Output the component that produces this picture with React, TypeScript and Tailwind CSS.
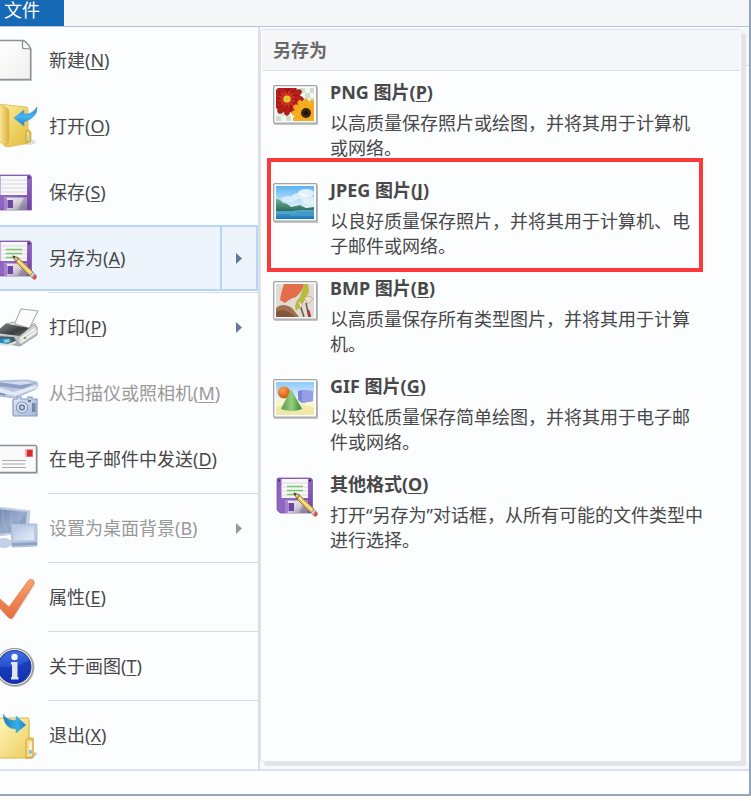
import React from 'react'
import clsx from 'clsx'

interface MenuEntry {
  label: string
  hotkey: string
  icon: React.ReactNode
  submenu?: boolean
  active?: boolean
  disabled?: boolean
  separator?: boolean
}

interface FormatEntry {
  label: string
  hotkey: string
  description: string
  icon: React.ReactNode
  marked?: boolean
}

/* ---------- 左侧菜单图标 ---------- */

const MenuIcon: React.FC<{ children: React.ReactNode }> = ({ children }) => (
  <svg viewBox="0 0 40 48" className="h-12 w-10 shrink-0" aria-hidden="true">
    {children}
  </svg>
)

const NewIcon = () => (
  <MenuIcon>
    <defs>
      <linearGradient id="newPage" x1="0" y1="0" x2="1" y2="1">
        <stop offset="0" stopColor="#ffffff" />
        <stop offset="1" stopColor="#f0f0ef" />
      </linearGradient>
    </defs>
    <path d="M-4 5H23L32 13V45H-4Z" fill="#c9cacb" />
    <path d="M-4 4.500H23Q26 5 30.500 12V43.500H-4Z" fill="url(#newPage)" stroke="#8f9191" strokeWidth="1.300" />
    <path d="M22.500 4.500V11.500Q23 13 25 12.500L30.500 13Q28 6.500 22.500 4.500Z" fill="#fafafa" stroke="#8f9191" strokeWidth="1.200" />
  </MenuIcon>
)

const OpenIcon = () => (
  <MenuIcon>
    <defs>
      <linearGradient id="openBack" x1="0" y1="0" x2="1" y2="1">
        <stop offset="0" stopColor="#fdf0a8" />
        <stop offset="0.500" stopColor="#eed467" />
        <stop offset="1" stopColor="#e3b93c" />
      </linearGradient>
      <linearGradient id="openFront" x1="0" y1="0" x2="1" y2="0">
        <stop offset="0" stopColor="#fff3a9" />
        <stop offset="1" stopColor="#dcae3f" />
      </linearGradient>
      <linearGradient id="openArrow" x1="0" y1="0" x2="0" y2="1">
        <stop offset="0" stopColor="#3a7fc0" />
        <stop offset="0.500" stopColor="#47b4f2" />
        <stop offset="1" stopColor="#1d7fd0" />
      </linearGradient>
    </defs>
    <ellipse cx="28" cy="40" rx="8" ry="3" fill="#c9cbcf" opacity="0.600" />
    <path d="M-2 2L26 5Q28 5 28 7V27L31 30V38Q31 40 29 41L8 45L-2 38Z" fill="url(#openBack)" stroke="#dfb752" strokeWidth="0.800" />
    <path d="M-2 2L7 6Q9 7 9 10V40L6 45L-2 38Z" fill="url(#openFront)" stroke="#dfb752" strokeWidth="0.800" />
    <path d="M26 29Q30 28 30 32V39L26 40Z" fill="#f5df87" stroke="#c99425" strokeWidth="0.800" />
    <rect x="27" y="33" width="1.500" height="6" fill="#9dd7e8" />
    <path d="M37 5Q38 15 24 20V24L14 16L24 8V12Q32 13 37 5Z" fill="url(#openArrow)" stroke="#4c9bd6" strokeWidth="0.600" />
  </MenuIcon>
)

const FloppyShape: React.FC<{ uid: string; pencil?: boolean }> = ({ uid, pencil }) => (
  <>
    <defs>
      <linearGradient id={`${uid}-body`} x1="0" y1="0" x2="1" y2="1">
        <stop offset="0" stopColor="#8a60bd" />
        <stop offset="0.500" stopColor="#9267c3" />
        <stop offset="1" stopColor="#6f3ca5" />
      </linearGradient>
      <linearGradient id={`${uid}-metal`} x1="0" y1="0" x2="1" y2="1">
        <stop offset="0" stopColor="#f4f2f7" />
        <stop offset="0.500" stopColor="#d3d0da" />
        <stop offset="1" stopColor="#8d8797" />
      </linearGradient>
    </defs>
    <path d="M1 0H34L35.500 2V35H3L0 32V1Z" fill={`url(#${uid}-body)`} stroke="#77529f" strokeWidth="0.700" />
    <rect x="4.500" y="1" width="26.500" height="19" fill="#f7f7f9" />
    <path d="M4.500 5H31M4.500 9H31M4.500 13H31M4.500 17H31" stroke="#d5d5dc" strokeWidth="0.900" />
    <path d="M32 2.500H34M1.500 2.500H3" stroke="#432266" strokeWidth="1.800" />
    <rect x="8" y="22.500" width="23" height="12.500" fill={`url(#${uid}-metal)`} />
    <rect x="8" y="22.500" width="3" height="12.500" fill="#a385cb" />
    <rect x="11.500" y="25" width="5.500" height="8" fill="#7044a5" />
    <path d="M22 35L28 22.500H31V35Z" fill="#79658e" opacity="0.450" />
    {pencil && (
      <>
        <path d="M10 8.500H26M10 12.500H26M10 16.500H22" stroke="#7bc96c" strokeWidth="1.700" />
        <path d="M17 15L22.500 17L20 21Z" fill="#ead1a0" stroke="#6d5135" strokeWidth="0.800" />
        <path d="M16.500 14.500L19.500 15.800L17.800 18Z" fill="#433b32" />
        <path d="M22.500 17L37 31L34 35L20 21Z" fill="#e8c15e" stroke="#8c6839" strokeWidth="0.800" />
        <path d="M22 19.500L35.500 32.500" stroke="#fff0a7" strokeWidth="1.200" />
        <path d="M37 31L39 33L36 37L34 35Z" fill="#c4d3c8" stroke="#7a9080" strokeWidth="0.500" />
        <path d="M39 33Q42 35 40 38Q38 40 36 37Z" fill="#dc5357" />
      </>
    )}
  </>
)

const SaveIcon = () => (
  <MenuIcon>
    <g transform="translate(-4 7)">
      <FloppyShape uid="save" />
    </g>
  </MenuIcon>
)

const SaveAsIcon = () => (
  <MenuIcon>
    <g transform="translate(-4 7)">
      <FloppyShape uid="saveas" pencil />
    </g>
  </MenuIcon>
)

const PrintIcon = () => (
  <MenuIcon>
    <defs>
      <linearGradient id="printTop" x1="0" y1="0" x2="1" y2="1">
        <stop offset="0" stopColor="#8a8c8e" />
        <stop offset="0.600" stopColor="#3c3d3f" />
        <stop offset="1" stopColor="#6c6e70" />
      </linearGradient>
      <linearGradient id="printSide" x1="0" y1="0" x2="0" y2="1">
        <stop offset="0" stopColor="#eceeef" />
        <stop offset="1" stopColor="#a3a6a9" />
      </linearGradient>
    </defs>
    <path d="M14 22L21 6L38 8L29 26Z" fill="#fbfbfb" stroke="#b2b4b6" strokeWidth="1.200" />
    <path d="M-3 29L6 21L14 19L15 21L29 25L34 20L37 24V32L20 43L8 41L-3 37Z" fill="url(#printSide)" stroke="#9b9ea0" strokeWidth="0.900" />
    <path d="M-3 28L6 20.500L29 25L20 33L-3 30Z" fill="url(#printTop)" />
    <path d="M20 33L34 22L37 25V31L21 42L17 38Z" fill="#d3d6d7" stroke="#a0a3a6" strokeWidth="0.800" />
    <path d="M20 36L35 26M21 39L37 28" stroke="#fafafa" strokeWidth="1.500" />
    <circle cx="25" cy="35" r="1.300" fill="#6eae51" />
    <path d="M-3 33L14 34L16 38L9 41L-3 38Z" fill="#4c5964" />
    <path d="M-2 36L9 35L12 38L6 41L-3 40Z" fill="#2488c8" />
    <path d="M3 37L9 36L10 39L5 40Z" fill="#83d4c7" />
    <path d="M-2 41L8 42L16 39" fill="none" stroke="#dde1e3" strokeWidth="2" />
  </MenuIcon>
)

const ScannerIcon = () => (
  <MenuIcon>
    <defs>
      <linearGradient id="scanCamera" x1="0" y1="0" x2="1" y2="1">
        <stop offset="0" stopColor="#e2e9f5" />
        <stop offset="1" stopColor="#a6b6d4" />
      </linearGradient>
    </defs>
    <path d="M-2 12L26 11L37 13Q39 16 36 20L15 29L-2 27Z" fill="#b9c7df" stroke="#a3b3cf" strokeWidth="0.800" />
    <path d="M-2 13L27 12L36 14L23 20L-2 17Z" fill="#8da0c3" />
    <path d="M-2 13L27 12L35 14L20 16Z" fill="#d1dcee" />
    <path d="M-2 18L13 23L36 16L37 19L15 27L-2 23Z" fill="#e1e9f5" />
    <path d="M-2 24L5 26" stroke="#7186ae" strokeWidth="1.500" />
    <path d="M14 30H17V28H21V30H28V28H32V30H37V47H14Q13 47 13 45V31Z" fill="url(#scanCamera)" stroke="#879cc1" strokeWidth="1.200" />
    <circle cx="22" cy="38.500" r="5.500" fill="#e8eef8" stroke="#8296bb" strokeWidth="1.200" />
    <circle cx="22" cy="38.500" r="2.500" fill="#bdcae0" stroke="#667ba4" strokeWidth="1.400" />
    <rect x="32" y="34" width="3.500" height="9" fill="#7188b2" />
    <path d="M28 32H31" stroke="#657ba5" strokeWidth="2" />
  </MenuIcon>
)

const MailIcon = () => (
  <MenuIcon>
    <path d="M-2 12H38V39H-2Z" fill="#c8c9ca" />
    <rect x="-2" y="10.500" width="38.500" height="27" rx="1" fill="#fafafa" stroke="#8e8f90" strokeWidth="1.400" />
    <rect x="25" y="14" width="8" height="8" fill="#f1a9a9" />
    <rect x="27" y="15" width="5.500" height="6.500" fill="#d92a30" />
    <path d="M2 25.500H26M2 29H25M2 32.500H26" stroke="#a9aaab" strokeWidth="1.100" />
  </MenuIcon>
)

const DesktopIcon = () => (
  <MenuIcon>
    <defs>
      <linearGradient id="deskScreen" x1="0" y1="0" x2="1" y2="1">
        <stop offset="0" stopColor="#7187b2" />
        <stop offset="0.500" stopColor="#98aacb" />
        <stop offset="1" stopColor="#788eb7" />
      </linearGradient>
      <linearGradient id="deskSmall" x1="0" y1="0" x2="1" y2="1">
        <stop offset="0" stopColor="#b6c7e2" />
        <stop offset="1" stopColor="#e4edf8" />
      </linearGradient>
    </defs>
    <path d="M-2 3L30 7L28 28L-2 32Z" fill="#c3cfe3" stroke="#b9c6dc" strokeWidth="0.800" />
    <path d="M-2 5L27 8L25 27L-2 30Z" fill="url(#deskScreen)" />
    <path d="M2 6Q2 18 8 29M12 7Q9 16 14 28M23 8Q17 16 18 26" fill="none" stroke="#b6c4db" strokeWidth="1" opacity="0.500" />
    <ellipse cx="4" cy="39" rx="8" ry="5" fill="#c3d0e5" />
    <path d="M11 20H37V42L12 43Z" fill="#bccae1" stroke="#a3b5d3" strokeWidth="0.800" />
    <path d="M14 23H34V36H14Z" fill="url(#deskSmall)" />
    <path d="M12 39L37 38V41L12 42Z" fill="#8fa3c6" />
  </MenuIcon>
)

const PropertiesIcon = () => (
  <MenuIcon>
    <defs>
      <linearGradient id="checkFill" x1="0" y1="0" x2="0" y2="1">
        <stop offset="0" stopColor="#f6a46d" />
        <stop offset="1" stopColor="#e56b3f" />
      </linearGradient>
    </defs>
    <path d="M-4 26L0 29L10 37L30 7Q32 5 34 8V11L13 44Q11 47 8 44L-4 31Z" fill="#d7c9c4" opacity="0.700" transform="translate(1 1)" />
    <path d="M-4 23L0 26L9 34L28 8Q30 5 33 7Q35 9 33 12L13 44Q11 47 8 44L-4 31Z" fill="url(#checkFill)" stroke="#e17447" strokeWidth="0.700" />
  </MenuIcon>
)

const AboutIcon = () => (
  <MenuIcon>
    <defs>
      <linearGradient id="infoFill" x1="0" y1="0" x2="0" y2="1">
        <stop offset="0" stopColor="#3d6ee0" />
        <stop offset="1" stopColor="#1431c4" />
      </linearGradient>
    </defs>
    <circle cx="15" cy="25.500" r="19.500" fill="#b4b5b8" />
    <circle cx="14.500" cy="25" r="18.500" fill="#f1f1f2" stroke="#8d8f94" />
    <circle cx="14.500" cy="25" r="16.500" fill="url(#infoFill)" stroke="#243785" />
    <path d="M-2 24Q12 28 30 18Q33 31 22 39Q9 45 0 33Z" fill="#0b2da7" opacity="0.550" />
    <circle cx="14.500" cy="15" r="3.200" fill="#f5f6fb" />
    <path d="M11 20H17.500V35H18.500V37.500H11V35H12V22.500H11Z" fill="#e3e5ee" />
  </MenuIcon>
)

const ExitIcon = () => (
  <MenuIcon>
    <defs>
      <linearGradient id="exitFolder" x1="0" y1="0" x2="1" y2="1">
        <stop offset="0" stopColor="#fff6b9" />
        <stop offset="1" stopColor="#ebcc5c" />
      </linearGradient>
      <linearGradient id="exitArrow" x1="0" y1="0" x2="1" y2="0">
        <stop offset="0" stopColor="#2478a8" />
        <stop offset="0.600" stopColor="#35b0ea" />
        <stop offset="1" stopColor="#2084c8" />
      </linearGradient>
    </defs>
    <path d="M26 45L36 41L37 43L32 48H26Z" fill="#c5c7ca" />
    <path d="M-2 7H28Q29 7 29 9V27H33V46Q33 47 31 47H-2Z" fill="url(#exitFolder)" stroke="#ddb649" strokeWidth="1.200" />
    <path d="M26 47V30Q26 28 28 28H31Q33 28 33 30V46Z" fill="#f3dc83" stroke="#d3a33d" />
    <rect x="29.500" y="31" width="2" height="13" fill="#fdfdf3" />
    <rect x="29.500" y="39" width="2" height="4" fill="#6aafe0" />
    <path d="M3 3Q7 10 16 9V5L26 14L16 22V18Q4 18 3 3Z" fill="url(#exitArrow)" stroke="#4fa7d7" strokeWidth="0.500" />
  </MenuIcon>
)

/* ---------- 图片格式缩略图 ---------- */

const Thumbnail: React.FC<{ children: React.ReactNode }> = ({ children }) => (
  <svg viewBox="0 0 46 42" className="h-[42px] w-[46px] shrink-0" aria-hidden="true">
    <rect x="1" y="2" width="44" height="38" rx="1" fill="#c3c4c5" />
    <rect x="0.700" y="0.700" width="43" height="37.500" rx="1" fill="#fdfdfd" stroke="#a4a5a6" strokeWidth="1.300" />
    <svg x="3" y="3" width="38" height="33" viewBox="0 0 38 33">
      {children}
    </svg>
  </svg>
)

const petals = [0, 30, 60, 90, 120, 150, 180, 210, 240, 270, 300, 330]

const PngThumb = () => (
  <Thumbnail>
    <rect width="38" height="33" fill="#f4f6f1" />
    <path d="M24 0H29V5H24ZM34 0H38V5H34ZM29 5H34V10H29ZM24 10H29V15H24ZM34 10H38V15H34ZM0 28H5V33H0ZM5 23H10V28H5ZM10 28H15V33H10Z" fill="#cfdfc9" />
    <g transform="translate(11 11)">
      {petals.map((angle) => (
        <ellipse key={angle} cx="0" cy="-9" rx="3.600" ry="7.500" fill="#b81d18" stroke="#7e1512" strokeWidth="0.600" transform={`rotate(${angle})`} />
      ))}
      {petals.map((angle) => (
        <ellipse key={angle} cx="0" cy="-5" rx="1.200" ry="3.500" fill="#cf3526" transform={`rotate(${angle + 15})`} />
      ))}
      <circle r="3.600" fill="#eec82e" />
      <circle r="1.500" fill="#bccb31" />
    </g>
    <g transform="translate(30 25)">
      {petals.map((angle) => (
        <ellipse key={angle} cx="0" cy="-8" rx="3.200" ry="6.500" fill="#f7ad20" stroke="#e59c1b" strokeWidth="0.500" transform={`rotate(${angle})`} />
      ))}
      <circle r="5" fill="#39270f" />
      <circle r="2.500" fill="#191611" />
    </g>
  </Thumbnail>
)

const JpegThumb = () => (
  <Thumbnail>
    <defs>
      <linearGradient id="jpegSky" x1="0" y1="0" x2="0" y2="1">
        <stop offset="0" stopColor="#5cb2f2" />
        <stop offset="0.650" stopColor="#e2f5fc" />
      </linearGradient>
      <linearGradient id="jpegSea" x1="0" y1="0" x2="0" y2="1">
        <stop offset="0" stopColor="#55aacb" />
        <stop offset="1" stopColor="#1877b8" />
      </linearGradient>
      <linearGradient id="jpegHill" x1="0" y1="0" x2="0" y2="1">
        <stop offset="0" stopColor="#75b096" />
        <stop offset="1" stopColor="#2b6e58" />
      </linearGradient>
    </defs>
    <rect width="38" height="33" fill="url(#jpegSky)" />
    <ellipse cx="30" cy="7" rx="8" ry="4" fill="#ffffff" opacity="0.750" />
    <ellipse cx="23" cy="10" rx="7" ry="3" fill="#ffffff" opacity="0.600" />
    <ellipse cx="13" cy="13" rx="8" ry="3" fill="#ffffff" opacity="0.500" />
    <ellipse cx="33" cy="14" rx="8" ry="4" fill="#ffffff" opacity="0.550" />
    <path d="M0 13Q4 13 7 17Q11 17 15 21L24 19L30 22L38 21V25H0Z" fill="url(#jpegHill)" />
    <rect y="24" width="38" height="9" fill="url(#jpegSea)" />
    <path d="M0 24H16L24 25H0Z" fill="#2b6e68" />
    <path d="M0 27H20M14 29H38" stroke="#6ab9d8" strokeWidth="0.600" />
  </Thumbnail>
)

const BmpThumb = () => (
  <Thumbnail>
    <rect width="38" height="33" fill="#dedcd4" />
    <path d="M8 0H28Q26 8 20 13Q15 14 9 19L4 16Q5 8 8 0Z" fill="#e46d4b" />
    <path d="M28 0H32L33 8L26 21L20 27Q17 20 24 13Z" fill="#b8bb3b" />
    <path d="M0 24Q7 18 16 24L23 33H0Z" fill="#a0704f" />
    <path d="M0 28Q9 23 19 33H0Z" fill="#84543a" />
    <path d="M24 21L28 33M30 19L33 33" stroke="#6b5f50" strokeWidth="1.600" />
    <path d="M22 16L27 21L24 24ZM28 14Q33 10 37 15L32 20Z" fill="#eee0cb" stroke="#a8957b" strokeWidth="0.500" />
    <path d="M32 26L34 33" stroke="#b52f2d" strokeWidth="2.500" />
  </Thumbnail>
)

const GifThumb = () => (
  <Thumbnail>
    <defs>
      <linearGradient id="gifSky" x1="0" y1="0" x2="0" y2="1">
        <stop offset="0" stopColor="#8cc8f7" />
        <stop offset="0.600" stopColor="#f4fbff" />
      </linearGradient>
      <radialGradient id="gifBall" cx="0.400" cy="0.300" r="0.700">
        <stop offset="0" stopColor="#ffa04d" />
        <stop offset="1" stopColor="#cf5412" />
      </radialGradient>
      <linearGradient id="gifCone" x1="0" y1="0" x2="1" y2="0">
        <stop offset="0" stopColor="#55984a" />
        <stop offset="0.500" stopColor="#96cf7c" />
        <stop offset="1" stopColor="#35833c" />
      </linearGradient>
    </defs>
    <rect width="38" height="33" fill="url(#gifSky)" />
    <path d="M0 17Q19 13 38 20V33H0Z" fill="#f8f5cf" />
    <path d="M0 25Q19 18 38 26V33H0Z" fill="#efe8a8" />
    <path d="M22 9L26 8L37 9V19L26 21L22 18Z" fill="#7986d3" />
    <path d="M26 8V21L37 19V9Z" fill="#969fe5" />
    <circle cx="8" cy="10.500" r="6" fill="url(#gifBall)" />
    <path d="M15 7L26 27Q16 31 5 27Z" fill="url(#gifCone)" />
  </Thumbnail>
)

const OtherThumb = () => (
  <svg viewBox="0 0 46 42" className="h-[42px] w-[46px] shrink-0" aria-hidden="true">
    <g transform="translate(4 1)">
      <FloppyShape uid="other" pencil />
    </g>
  </svg>
)

const menuEntries: MenuEntry[] = [
  { label: '新建', hotkey: 'N', icon: <NewIcon /> },
  { label: '打开', hotkey: 'O', icon: <OpenIcon /> },
  { label: '保存', hotkey: 'S', icon: <SaveIcon /> },
  { label: '另存为', hotkey: 'A', icon: <SaveAsIcon />, submenu: true, active: true, separator: true },
  { label: '打印', hotkey: 'P', icon: <PrintIcon />, submenu: true },
  { label: '从扫描仪或照相机', hotkey: 'M', icon: <ScannerIcon />, disabled: true },
  { label: '在电子邮件中发送', hotkey: 'D', icon: <MailIcon />, separator: true },
  { label: '设置为桌面背景', hotkey: 'B', icon: <DesktopIcon />, submenu: true, disabled: true, separator: true },
  { label: '属性', hotkey: 'E', icon: <PropertiesIcon />, separator: true },
  { label: '关于画图', hotkey: 'T', icon: <AboutIcon />, separator: true },
  { label: '退出', hotkey: 'X', icon: <ExitIcon /> }
]

const formatEntries: FormatEntry[] = [
  { label: 'PNG 图片', hotkey: 'P', description: '以高质量保存照片或绘图，并将其用于计算机或网络。', icon: <PngThumb /> },
  { label: 'JPEG 图片', hotkey: 'J', description: '以良好质量保存照片，并将其用于计算机、电子邮件或网络。', icon: <JpegThumb />, marked: true },
  { label: 'BMP 图片', hotkey: 'B', description: '以高质量保存所有类型图片，并将其用于计算机。', icon: <BmpThumb /> },
  { label: 'GIF 图片', hotkey: 'G', description: '以较低质量保存简单绘图，并将其用于电子邮件或网络。', icon: <GifThumb /> },
  { label: '其他格式', hotkey: 'O', description: '打开“另存为”对话框，从所有可能的文件类型中进行选择。', icon: <OtherThumb /> }
]

const Hotkey: React.FC<{ letter: string }> = ({ letter }) => (
  <>
    (<span className="underline decoration-1 underline-offset-2 [text-decoration-skip-ink:none]">{letter}</span>)
  </>
)

const MenuRow: React.FC<{ entry: MenuEntry }> = ({ entry }) => (
  <li>
    <button
      type="button"
      disabled={entry.disabled}
      className={clsx(
        'flex h-[66px] w-full items-stretch border-y-2 text-left',
        entry.active ? 'border-[#b5d6fb] bg-[#edf4fc]' : 'border-transparent',
        entry.disabled ? 'text-[#999999]' : 'text-[#484848]'
      )}
    >
      <span className="flex flex-1 items-center gap-[9px]">
        {entry.icon}
        <span className="whitespace-nowrap">
          {entry.label}
          <Hotkey letter={entry.hotkey} />
        </span>
      </span>
      {entry.submenu && (
        <span
          className={clsx(
            'flex w-[38px] items-center border-x-2 pl-[14px]',
            entry.active ? 'border-[#b5d6fb]' : 'border-transparent'
          )}
        >
          <svg viewBox="0 0 6 11" className={clsx('h-[11px] w-[6px]', entry.disabled ? 'fill-[#999999]' : 'fill-[#657898]')} aria-hidden="true">
            <path d="M0 0L6 5.500L0 11Z" />
          </svg>
        </span>
      )}
    </button>
    {entry.separator && (
      <div className="ml-12 flex h-[3px] items-center">
        <div className="h-px w-full bg-[#d9dbdd]" />
      </div>
    )}
  </li>
)

const FormatRow: React.FC<{ entry: FormatEntry }> = ({ entry }) => (
  <li className="relative">
    <button type="button" className="flex w-full items-start gap-[11px] pr-[34px] pl-3 text-left text-[#484848]">
      <span className="pt-[6px]">{entry.icon}</span>
      <span className="flex-1">
        <span className="block leading-[26px] font-bold">
          {entry.label}
          <Hotkey letter={entry.hotkey} />
        </span>
        <span className="mt-[6px] block leading-[25px]">{entry.description}</span>
      </span>
    </button>
    {entry.marked && (
      <div className="pointer-events-none absolute -top-[19px] right-[38px] left-[6px] h-[114px] border-4 border-[#fc3838]" />
    )}
  </li>
)

const App: React.FC = () => {
  return (
    <div className="bg-white pb-[5px] font-['Noto_Sans','Noto_Sans_CJK_SC',sans-serif] text-[18px] leading-6" lang="zh-CN">
      <div className="border-r-2 border-b-2 border-[#97a5ba] bg-white">
        {/* 功能区标签 */}
        <header className="flex h-[27px] items-start border-b border-[#b3c5d9] bg-[#f5f6f8]">
          <button type="button" className="flex h-[26px] w-16 items-start bg-[#1669b5] pl-1 leading-5 text-white">
            文件
          </button>
        </header>

        <main className="flex border-b-2 border-[#d9e2f0] bg-[#fbfdff]">
          <nav className="w-[258px] shrink-0 pb-px">
            <ul>
              {menuEntries.map((entry) => (
                <MenuRow key={entry.hotkey} entry={entry} />
              ))}
            </ul>
          </nav>

          {/* 另存为子菜单 */}
          <div className="flex flex-1 border-l-2 border-[#dddfe2] bg-[#f8f9fb] pt-[2px] pb-[7px]">
            <section className="z-10 flex-1 rounded-[3px] border border-[#e2e3e5] bg-[#fbfdff] shadow-[4px_4px_0_#e2e4e7]">
              <h2 className="mx-px border-b border-[#dddfe1] bg-[#f5f6f8] px-[11px] py-2 font-bold text-[#6a6a6a]">另存为</h2>
              <ul className="flex flex-col gap-4 pt-2">
                {formatEntries.map((entry) => (
                  <FormatRow key={entry.label} entry={entry} />
                ))}
              </ul>
            </section>
            {/* 菜单后面露出的功能区边缘 */}
            <div className="w-[7px]">
              <div className="h-[37px] border-b border-[#d5d8dc] bg-[#f5f6f8]" />
            </div>
          </div>
        </main>

        <div className="h-[23px]" />
      </div>
    </div>
  )
}

export default App
